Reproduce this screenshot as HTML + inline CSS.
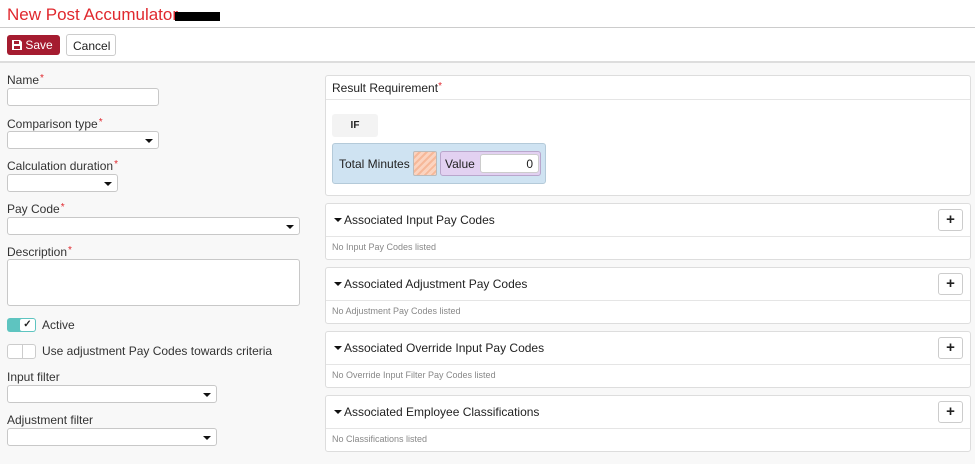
<!DOCTYPE html>
<html><head><meta charset="utf-8"><style>
*{box-sizing:border-box;margin:0;padding:0}
body{width:975px;height:464px;overflow:hidden;background:#f8f8f8;font-family:"Liberation Sans",Arial,sans-serif;color:#222;position:relative;font-size:12px}
.a{position:absolute}
.top{left:0;top:0;width:975px;height:63px;background:#fff;border-bottom:2px solid #ddd}
.lbl{font-size:12px;color:#333}
.lbl i{color:#e0282e;font-style:normal;font-size:10px;vertical-align:3px;margin-left:1px}
.inp{background:#fff;border:1px solid #c8c8c8;border-radius:3px;height:18px}
.sel::after{content:"";position:absolute;right:5px;top:7px;border-left:4px solid transparent;border-right:4px solid transparent;border-top:4px solid #111}
.panel{left:325px;width:646px;background:#fff;border:1px solid #ddd;border-radius:3px}
.ph{height:33px;border-bottom:1px solid #e5e5e5;font-size:12px;padding:9px 0 0 8px;position:relative}
.ph b{display:inline-block;border-left:4px solid transparent;border-right:4px solid transparent;border-top:4px solid #111;vertical-align:2px;margin-right:2px}
.pb{font-size:9px;color:#888;padding:5px 0 0 6px;height:22px}
.plus{position:absolute;right:7px;top:5px;width:25px;height:22px;border:1px solid #ccc;border-radius:3px;background:#fff;font-weight:bold;font-size:15px;text-align:center;line-height:20px}
</style></head><body>
<div class="a top"></div>
<div class="a" style="left:7px;top:5px;font-size:17px;color:#e0282e">New Post Accumulator</div>
<div class="a" style="left:175px;top:12px;width:45px;height:9px;background:#000"></div>
<div class="a" style="left:0;top:27px;width:975px;height:1px;background:#ccc"></div>
<div class="a" style="left:7px;top:35px;width:53px;height:20px;background:#a51c30;border-radius:3px;color:#fff;font-size:12px;padding:3px 0 0 5px">
<svg width="10" height="10" viewBox="0 0 10 10" style="vertical-align:-1px"><path d="M0 0h8l2 2v8H0z" fill="#fff"/><rect x="2" y="1" width="5" height="3" fill="#a51c30"/><rect x="2" y="6" width="6" height="3" fill="#a51c30"/></svg> Save</div>
<div class="a" style="left:66px;top:34px;width:50px;height:22px;background:#fff;border:1px solid #ccc;border-radius:3px;font-size:12px;padding:4px 0 0 6px">Cancel</div>

<div class="a lbl" style="left:7px;top:73px">Name<i>*</i></div>
<div class="a inp" style="left:7px;top:88px;width:152px"></div>
<div class="a lbl" style="left:7px;top:117px">Comparison type<i>*</i></div>
<div class="a inp sel" style="left:7px;top:131px;width:152px"></div>
<div class="a lbl" style="left:7px;top:159px">Calculation duration<i>*</i></div>
<div class="a inp sel" style="left:7px;top:174px;width:111px"></div>
<div class="a lbl" style="left:7px;top:202px">Pay Code<i>*</i></div>
<div class="a inp sel" style="left:7px;top:217px;width:293px"></div>
<div class="a lbl" style="left:7px;top:245px">Description<i>*</i></div>
<div class="a inp" style="left:7px;top:259px;width:293px;height:47px"></div>
<div class="a" style="left:7px;top:318px;width:29px;height:14px;background:#5ec4c0;border-radius:3px"><div class="a" style="left:13px;top:1px;width:15px;height:12px;background:#fff;border-radius:2px;font-size:10px;font-weight:bold;text-align:center;line-height:12px">✓</div></div>
<div class="a lbl" style="left:42px;top:318px">Active</div>
<div class="a" style="left:7px;top:344px;width:29px;height:15px;background:#fff;border:1px solid #ccc;border-radius:3px"><div class="a" style="left:0;top:0;width:15px;height:13px;border-right:1px solid #ccc"></div></div>
<div class="a lbl" style="left:42px;top:344px">Use adjustment Pay Codes towards criteria</div>
<div class="a lbl" style="left:7px;top:370px">Input filter</div>
<div class="a inp sel" style="left:7px;top:385px;width:210px"></div>
<div class="a lbl" style="left:7px;top:413px">Adjustment filter</div>
<div class="a inp sel" style="left:7px;top:428px;width:210px"></div>

<div class="a panel" style="top:75px;height:121px">
<div style="height:24px;border-bottom:1px solid #e5e5e5;font-size:12px;padding:5px 0 0 6px">Result Requirement<span style="color:#e0282e;font-size:10px;vertical-align:3px">*</span></div>
<div class="a" style="left:6px;top:38px;width:46px;height:23px;background:#f3f3f3;border-radius:3px;font-size:10px;font-weight:bold;text-align:center;line-height:23px">IF</div>
<div class="a" style="left:6px;top:67px;width:214px;height:41px;background:#cfe3f2;border:1px solid #b4cad9;border-radius:3px">
<div class="a" style="left:6px;top:13px;font-size:12px">Total Minutes</div>
<div class="a" style="left:80px;top:7px;width:24px;height:25px;border:1px solid #bbb;border-radius:2px;background:repeating-linear-gradient(135deg,#fbd3bf 0 3px,#f6b899 3px 5px)"></div>
<div class="a" style="left:107px;top:7px;width:101px;height:25px;background:#e2d1f1;border:1px solid #b9a6cc;border-radius:3px">
<div class="a" style="left:4px;top:5px;font-size:12px">Value</div>
<div class="a" style="left:39px;top:2px;width:59px;height:19px;background:#fff;border:1px solid #ccc;border-radius:3px;text-align:right;padding:2px 5px 0 0;font-size:12px">0</div>
</div></div>
</div>

<div class="a panel" style="top:203px"><div class="ph"><b></b>Associated Input Pay Codes<div class="plus">+</div></div><div class="pb">No Input Pay Codes listed</div></div>
<div class="a panel" style="top:267px"><div class="ph"><b></b>Associated Adjustment Pay Codes<div class="plus">+</div></div><div class="pb">No Adjustment Pay Codes listed</div></div>
<div class="a panel" style="top:331px"><div class="ph"><b></b>Associated Override Input Pay Codes<div class="plus">+</div></div><div class="pb">No Override Input Filter Pay Codes listed</div></div>
<div class="a panel" style="top:395px"><div class="ph"><b></b>Associated Employee Classifications<div class="plus">+</div></div><div class="pb">No Classifications listed</div></div>
</body></html>
